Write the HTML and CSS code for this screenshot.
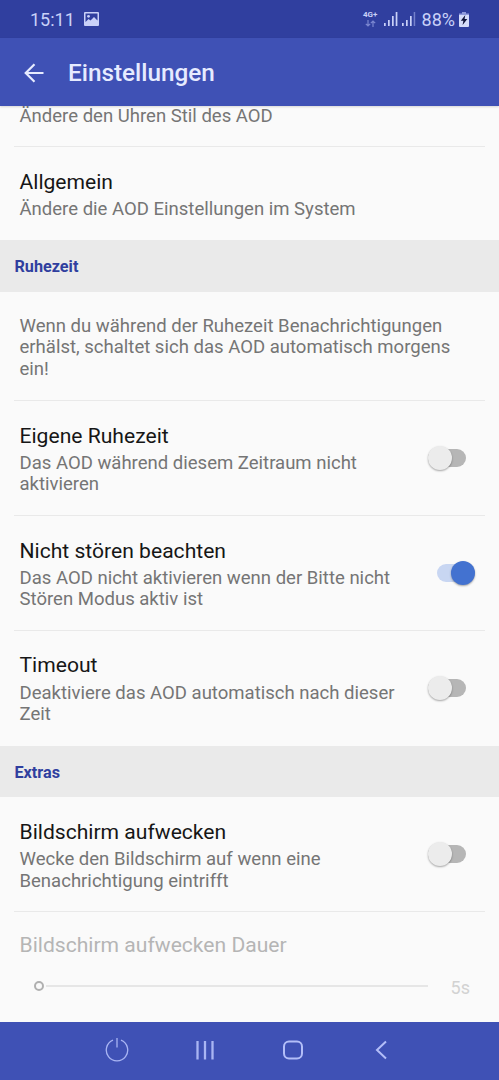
FILE: index.html
```
<!DOCTYPE html>
<html lang="de">
<head>
  <meta charset="UTF-8">
  <meta name="viewport" content="width=device-width, initial-scale=1.0">
  <title>Einstellungen</title>
  <link rel="stylesheet" href="styles.css">
</head>
<body>
  <div class="status-bar">
    <span class="clock">15:11</span>
    <svg class="picture-icon" width="15" height="14" viewBox="0 0 15 14">
      <path fill="#c9d1f8" fill-rule="evenodd" d="M1 0h13a1 1 0 0 1 1 1v12a1 1 0 0 1-1 1H1a1 1 0 0 1-1-1V1a1 1 0 0 1 1-1zM1.500 1.500V10L4.500 7l2 1.500L10 5l3.500 3.500v-7z"/>
      <circle cx="4.500" cy="4.300" r="1.400" fill="#c9d1f8"/>
    </svg>
    <div class="status-right">
      <div class="network">
        <span>4G+</span>
        <svg width="11" height="7" viewBox="0 0 11 7" fill="none" stroke="#7b87d0" stroke-width="1.200">
          <path d="M3 0v6M.8 3.800L3 6l2.200-2.200M8 7V1M5.800 3.200L8 1l2.200 2.200"/>
        </svg>
      </div>
      <svg class="signal" width="14" height="14" viewBox="0 0 14 14" fill="#c9d1f8">
        <path d="M0 11h1.700v3H0zM4 8h1.700v6H4zM8 4h1.700v10H8zM11.700 0h1.700v14h-1.700z"/>
      </svg>
      <svg class="signal" width="14" height="14" viewBox="0 0 14 14" fill="#c9d1f8">
        <path d="M0 11h1.700v3H0zM4 8h1.700v6H4zM8 4h1.700v10H8z"/>
        <path fill="#7480cb" d="M11.700 0h1.500v14h-1.500z"/>
      </svg>
      <span class="percent">88%</span>
      <svg class="battery" width="10" height="15" viewBox="0 0 10 15">
        <path fill="#8f9add" d="M3 0h4v1.500h3V4H0V1.500h3z"/>
        <path fill="#d5dcfa" d="M0 3h10v11a1 1 0 0 1-1 1H1a1 1 0 0 1-1-1z"/>
        <path fill="#10143a" d="M6.300 3L1.800 8.700h2.600L3.600 13l4.700-6H5.600z"/>
      </svg>
    </div>
  </div>

  <header class="toolbar">
    <svg class="back-arrow" width="20" height="20" viewBox="0 0 20 20" fill="none" stroke="#e6ebff" stroke-width="2.200">
      <path d="M19.500 10H2M10.500 1.200L1.700 10l8.800 8.800"/>
    </svg>
    <h1>Einstellungen</h1>
  </header>

  <main>
    <div class="row row-cut">
      <p class="summary">Ändere den Uhren Stil des AOD</p>
    </div>
    <div class="row">
      <div class="row-text">
        <h3>Allgemein</h3>
        <p class="summary">Ändere die AOD Einstellungen im System</p>
      </div>
    </div>

    <h2 class="category">Ruhezeit</h2>
    <div class="row row-info">
      <p class="summary">Wenn du während der Ruhezeit Benachrichtigungen erhälst, schaltet sich das AOD automatisch morgens ein!</p>
    </div>
    <div class="row">
      <div class="row-text">
        <h3>Eigene Ruhezeit</h3>
        <p class="summary">Das AOD während diesem Zeitraum nicht aktivieren</p>
      </div>
      <div class="switch"><span class="thumb"></span></div>
    </div>
    <div class="row">
      <div class="row-text">
        <h3>Nicht stören beachten</h3>
        <p class="summary">Das AOD nicht aktivieren wenn der Bitte nicht Stören Modus aktiv ist</p>
      </div>
      <div class="switch on"><span class="thumb"></span></div>
    </div>
    <div class="row">
      <div class="row-text">
        <h3>Timeout</h3>
        <p class="summary">Deaktiviere das AOD automatisch nach dieser Zeit</p>
      </div>
      <div class="switch"><span class="thumb"></span></div>
    </div>

    <h2 class="category">Extras</h2>
    <div class="row">
      <div class="row-text">
        <h3>Bildschirm aufwecken</h3>
        <p class="summary">Wecke den Bildschirm auf wenn eine Benachrichtigung eintrifft</p>
      </div>
      <div class="switch"><span class="thumb"></span></div>
    </div>
    <div class="row row-slider">
      <h3>Bildschirm aufwecken Dauer</h3>
      <div class="slider">
        <span class="slider-thumb"></span>
        <span class="slider-track"></span>
        <span class="slider-value">5s</span>
      </div>
    </div>
  </main>

  <nav class="nav-bar">
    <svg width="24" height="24" viewBox="0 0 24 24" fill="none" stroke="#a9b5f3" stroke-width="1.300">
      <path d="M8 2.200a10.700 10.700 0 1 0 8 0M12 0v9.500"/>
    </svg>
    <svg width="24" height="24" viewBox="0 0 24 24" fill="none" stroke="#a9b5f3" stroke-width="2.300">
      <path d="M4.500 3v18.500M12 3v18.500M19.500 3v18.500"/>
    </svg>
    <svg width="24" height="24" viewBox="0 0 24 24" fill="none" stroke="#b3bef8" stroke-width="2">
      <rect x="3" y="3.500" width="18" height="17" rx="5"/>
    </svg>
    <svg width="24" height="24" viewBox="0 0 24 24" fill="none" stroke="#b3bef8" stroke-width="2">
      <path d="M17 3.500L8 12l9 8.500"/>
    </svg>
  </nav>
</body>
</html>
```
FILE: styles.css
```
* {
  margin: 0;
  padding: 0;
  box-sizing: border-box;
}

body {
  height: 1080px;
  display: flex;
  flex-direction: column;
  font-family: Roboto, sans-serif;
  background: #fafafa;
  overflow: hidden;
}

.status-bar {
  height: 38px;
  flex: none;
  display: flex;
  align-items: center;
  padding: 0 30px 0 30px;
  background: #303f9f;
  color: #c9d1f8;
}

.clock {
  font-size: 18px;
  line-height: 22px;
  margin-top: 1px;
}

.picture-icon {
  margin-left: 9px;
}

.status-right {
  display: flex;
  align-items: center;
  margin-left: auto;
}

.network {
  display: flex;
  flex-direction: column;
  align-items: center;
  gap: 1px;
  width: 15px;
  margin-right: 6px;
  font-size: 8px;
  font-weight: 700;
  line-height: 8px;
}

.signal {
  margin-right: 4px;
}

.percent {
  margin: 1px 4px 0 2px;
  font-size: 18px;
  line-height: 22px;
}

.toolbar {
  position: relative;
  z-index: 1;
  height: 68px;
  flex: none;
  display: flex;
  align-items: center;
  padding: 1px 24px 0;
  background: #3f51b5;
  box-shadow: 0 1px 2px rgba(0, 0, 0, 0.15);
}

.toolbar h1 {
  margin-left: 24px;
  font-size: 24.3px;
  font-weight: 500;
  line-height: 30px;
  color: #e6ebff;
}

main {
  flex: 1;
  min-height: 0;
}

.row {
  display: flex;
  align-items: center;
  margin: 0 14px;
  padding: 21.8px 6px 18.6px 5.5px;
  border-bottom: 1px solid #e9e9e9;
}

.row:has(+ .category) {
  border-bottom-color: transparent;
}

.row-cut {
  padding-top: 0;
}

.row-info {
  height: 109px;
  padding-top: 23.5px;
  padding-right: 20px;
}

.row-text {
  width: 388px;
}

h3 {
  font-size: 21.1px;
  font-weight: 400;
  line-height: 25px;
  color: #161616;
}

.summary {
  font-size: 18.55px;
  line-height: 21.7px;
  color: #757575;
}

h3 + .summary {
  margin-top: 5.1px;
}

.category {
  height: 51.4px;
  padding-left: 14.5px;
  font-size: 16.2px;
  font-weight: 700;
  line-height: 53px;
  color: #303f9f;
  background: #eaeaea;
}

.switch {
  display: flex;
  align-items: center;
  flex: none;
  width: 38px;
  height: 18px;
  margin-left: 20.5px;
  margin-top: -2px;
  border-radius: 9px;
  background: #b6b6b6;
}

.switch .thumb {
  flex: none;
  width: 24px;
  height: 24px;
  border-radius: 50%;
  background: #ececec;
  box-shadow: 0 1px 2px rgba(0, 0, 0, 0.35);
}

.switch.on {
  justify-content: flex-end;
  margin-left: 29.5px;
  background: #c8d6f2;
}

.switch.on .thumb {
  background: #4372d0;
}

.row-slider {
  display: block;
  padding-top: 20.5px;
  padding-bottom: 0;
  border-bottom: none;
}

.row-slider h3 {
  color: #b5b5b5;
}

.slider {
  display: flex;
  align-items: center;
  margin: 18px 9px 0 14.5px;
}

.slider-thumb {
  width: 10px;
  height: 10px;
  border: 2px solid #b0b0b0;
  border-radius: 50%;
}

.slider-track {
  width: 382px;
  height: 2px;
  margin-left: 2px;
  background: #e6e6e6;
}

.slider-value {
  margin: 2px 0 -2px auto;
  font-size: 18px;
  line-height: 22px;
  color: #d2d2d2;
}

.nav-bar {
  height: 58px;
  flex: none;
  display: flex;
  align-items: center;
  justify-content: space-between;
  padding: 0 106px 3px 105px;
  background: #3f51b5;
}
```
